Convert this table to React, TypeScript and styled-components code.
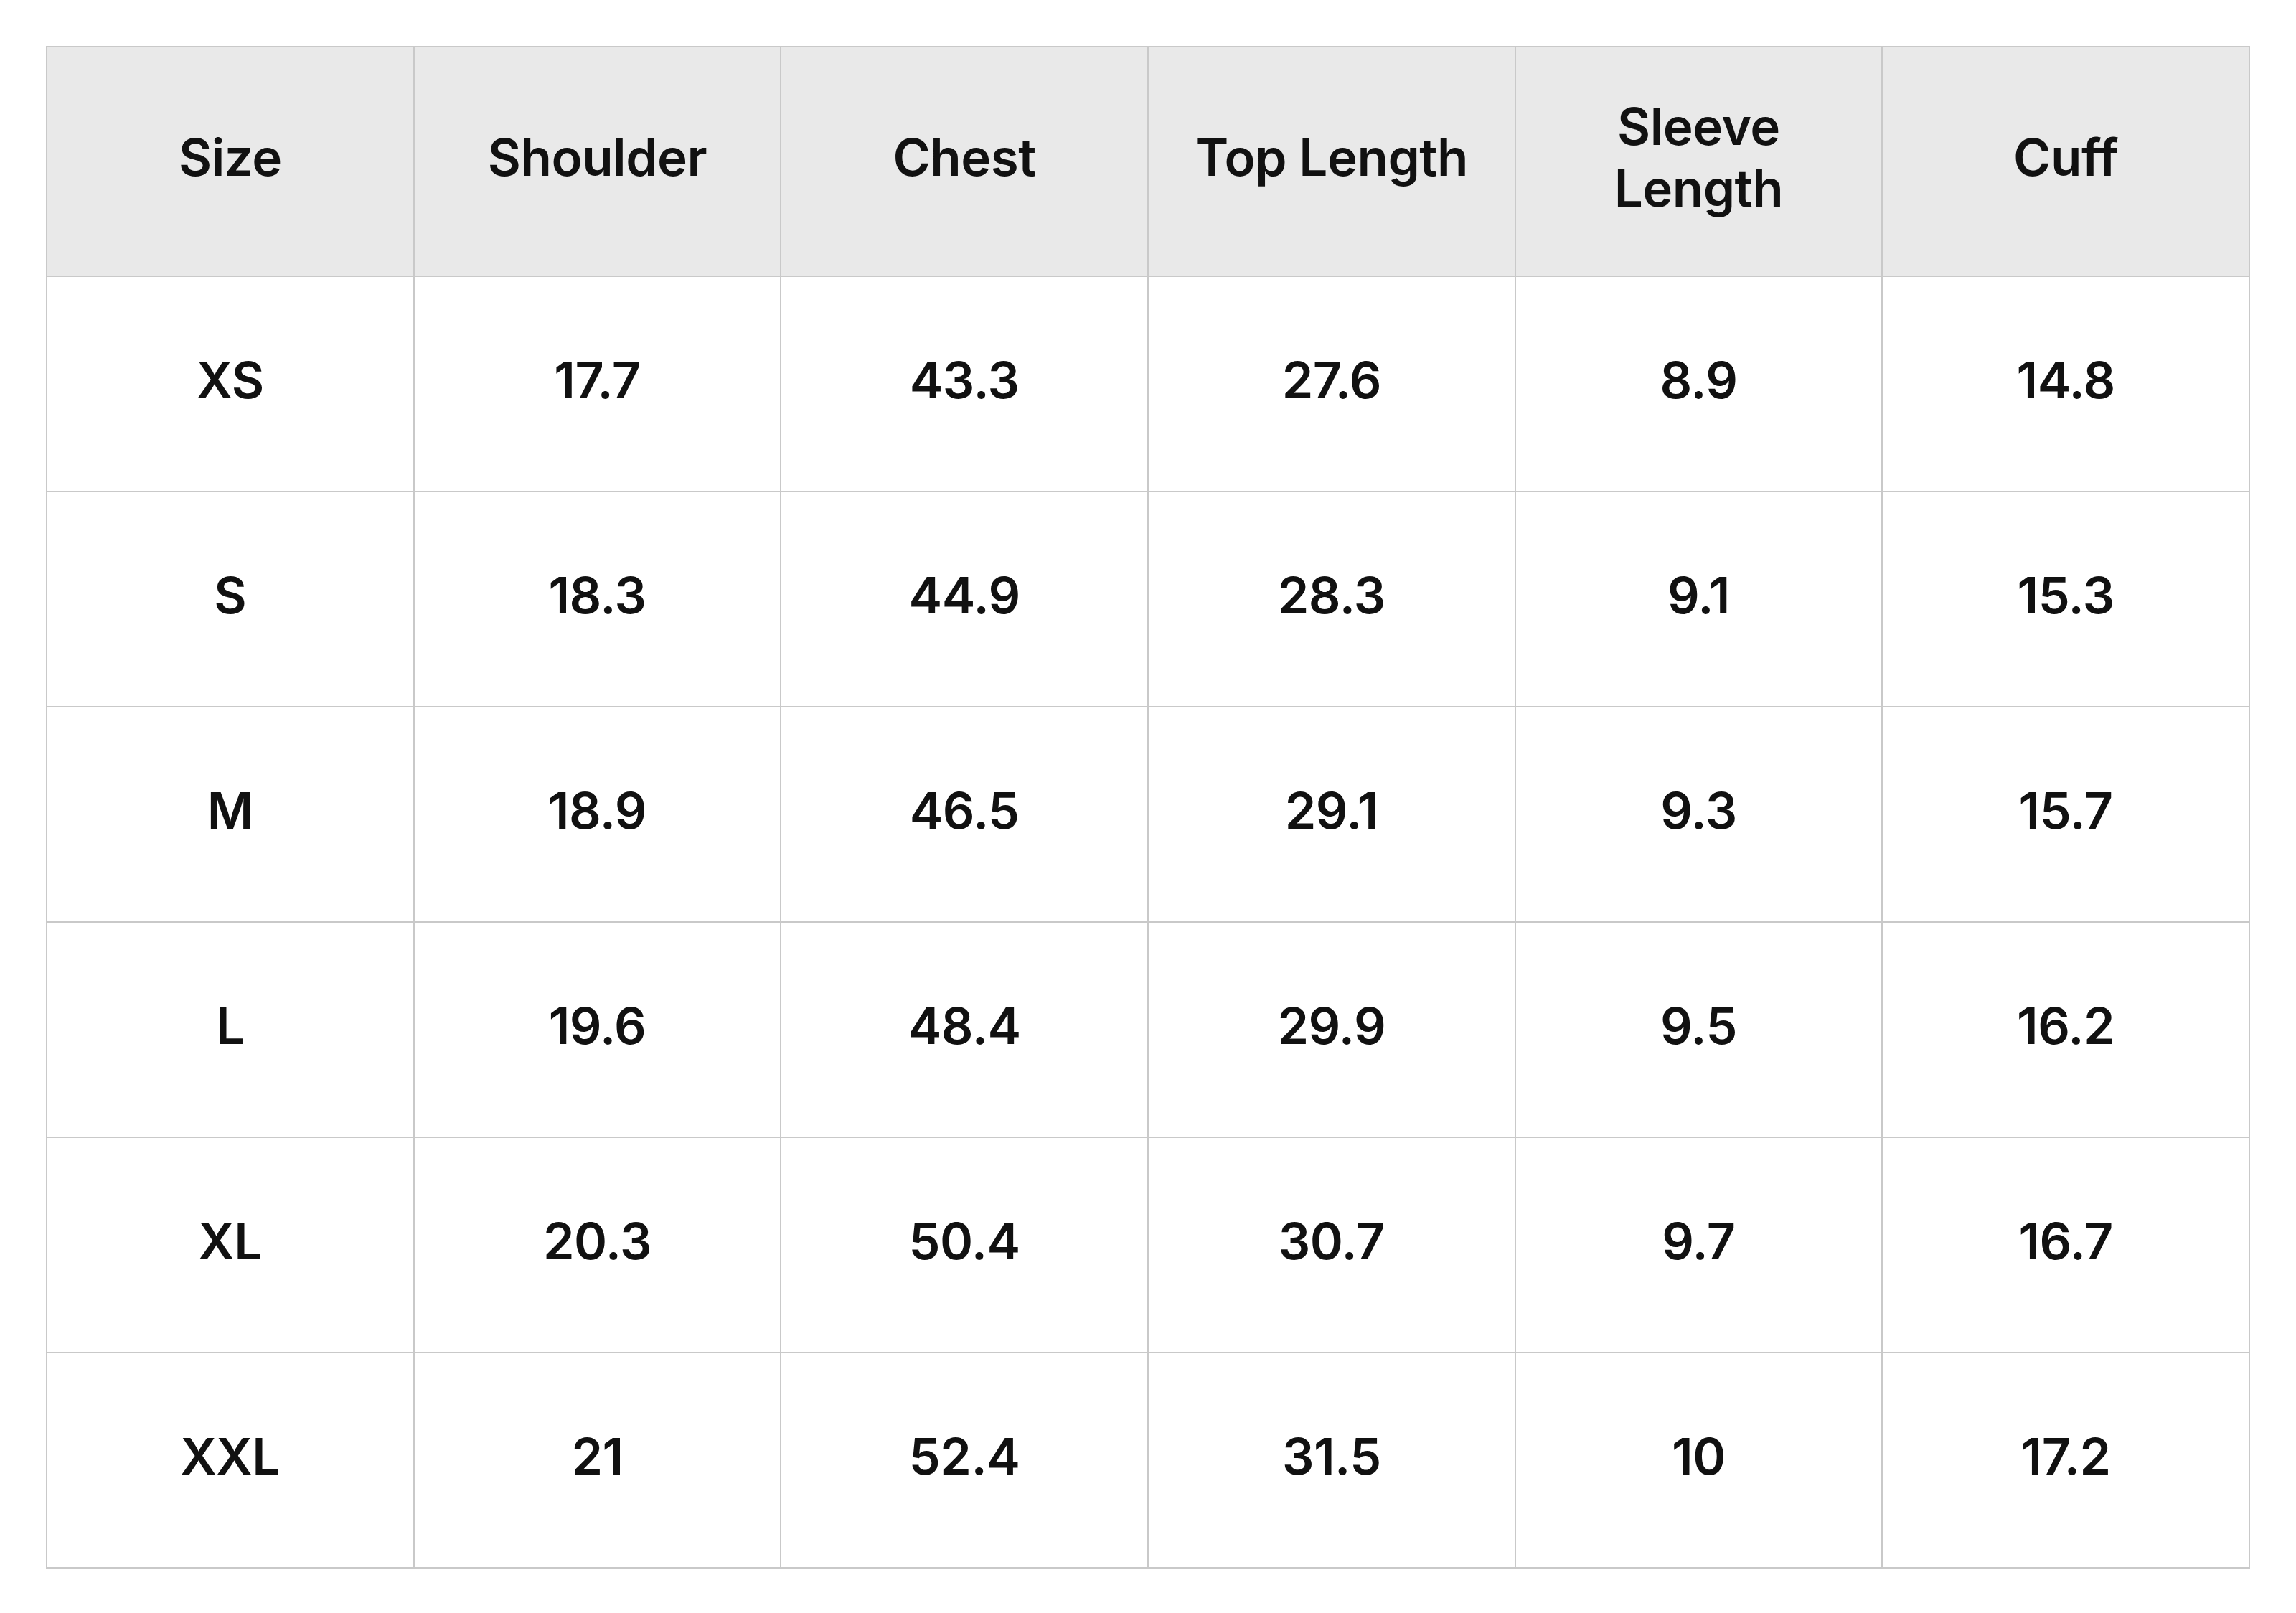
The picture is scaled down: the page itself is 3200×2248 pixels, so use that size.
import styled, { createGlobalStyle } from "styled-components";

const GlobalStyle = createGlobalStyle`
  html, body {
    margin: 0;
    padding: 0;
    background: #ffffff;
  }
  body {
    font-family: Inter, "Noto Sans", "Liberation Sans", sans-serif;
    color: #111111;
  }
`;

const Page = styled.div`
  padding: 64px;
  width: 3200px;
  box-sizing: border-box;
`;

const Table = styled.table`
  width: 3072px;
  border-collapse: collapse;
  table-layout: fixed;
  border: 2px solid #c9c9c9;
`;

const HeadCell = styled.th`
  height: 306px;
  background: #e9e9e9;
  border: 2px solid #c9c9c9;
  font-size: 71px;
  font-weight: 600;
  line-height: 86px;
  letter-spacing: -0.5px;
  text-align: center;
  vertical-align: middle;
  padding: 0 30px 12px;
  color: #111111;
`;

const Cell = styled.td`
  height: 286px;
  border: 2px solid #c9c9c9;
  font-size: 70px;
  font-weight: 600;
  letter-spacing: -0.5px;
  text-align: center;
  vertical-align: middle;
  padding: 0 0 12px;
  color: #111111;
`;

const columns = ["Size", "Shoulder", "Chest", "Top Length", "Sleeve Length", "Cuff"];

const rows = [
  ["XS", "17.7", "43.3", "27.6", "8.9", "14.8"],
  ["S", "18.3", "44.9", "28.3", "9.1", "15.3"],
  ["M", "18.9", "46.5", "29.1", "9.3", "15.7"],
  ["L", "19.6", "48.4", "29.9", "9.5", "16.2"],
  ["XL", "20.3", "50.4", "30.7", "9.7", "16.7"],
  ["XXL", "21", "52.4", "31.5", "10", "17.2"],
];

const App = () => {
  return (
    <Page>
      <GlobalStyle />
      <Table>
        <thead>
          <tr>
            {columns.map((c) => (
              <HeadCell key={c}>{c}</HeadCell>
            ))}
          </tr>
        </thead>
        <tbody>
          {rows.map((r) => (
            <tr key={r[0]}>
              {r.map((v, i) => (
                <Cell key={i}>{v}</Cell>
              ))}
            </tr>
          ))}
        </tbody>
      </Table>
    </Page>
  );
};

export default App;
